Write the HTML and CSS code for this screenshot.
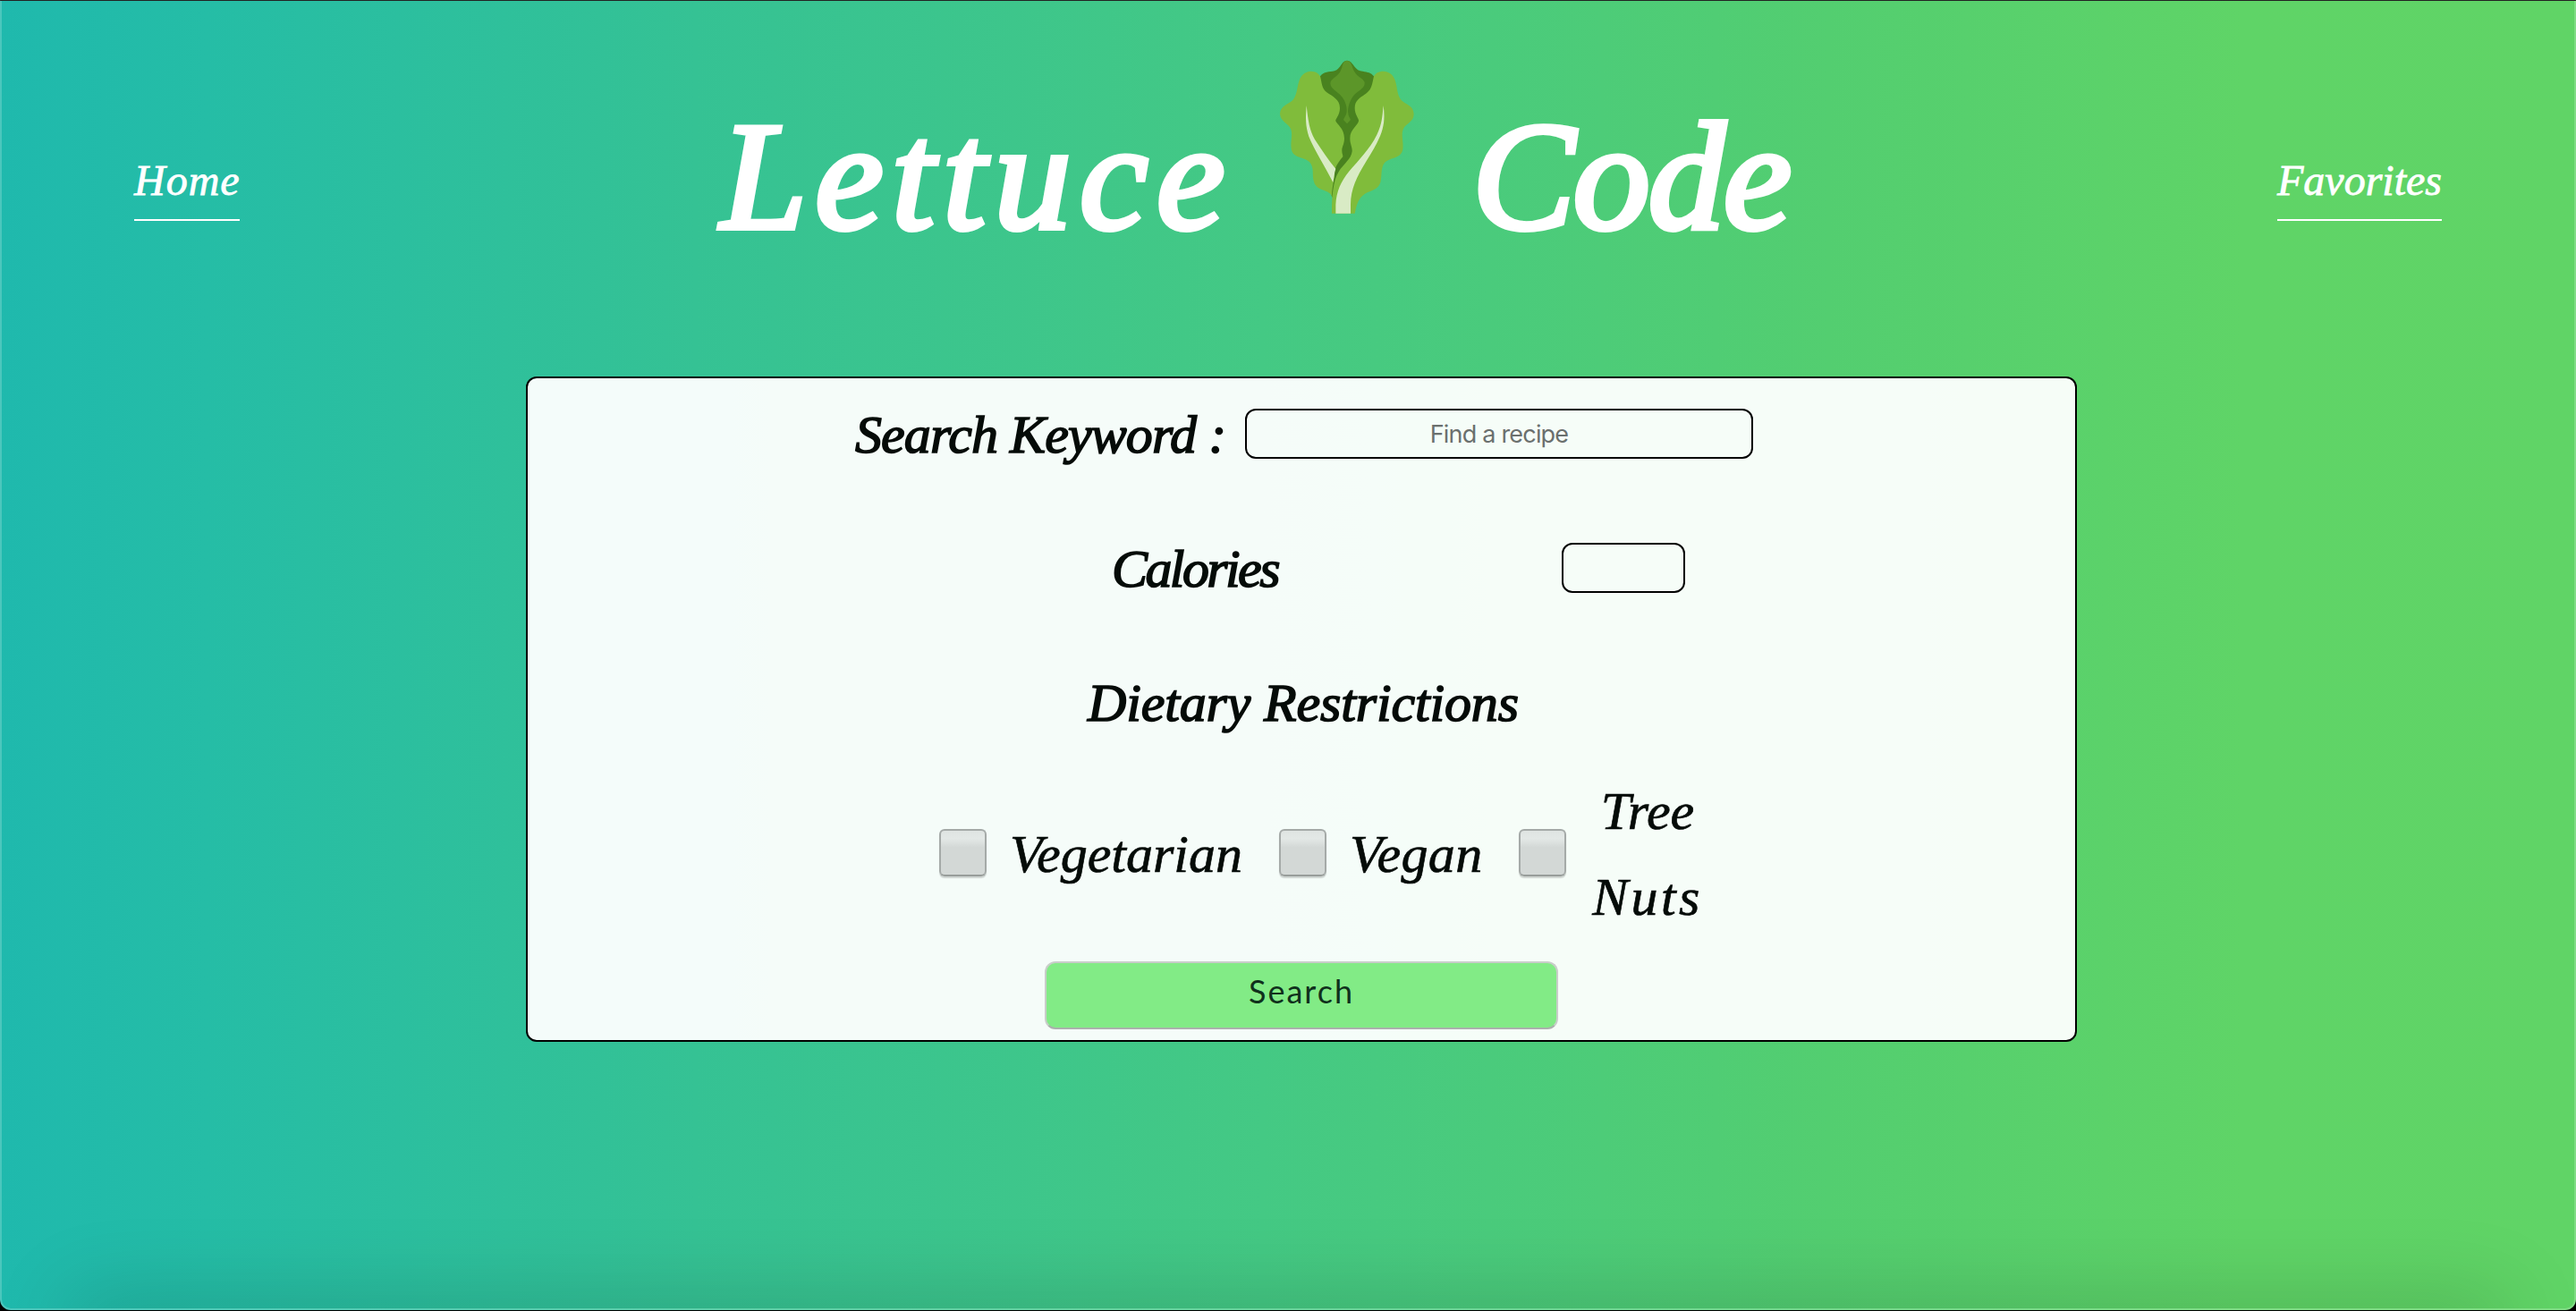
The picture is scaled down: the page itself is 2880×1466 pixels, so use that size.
FILE: index.html
```html
<!DOCTYPE html>
<html lang="en">
<head>
<meta charset="utf-8">
<title>Lettuce Code</title>
<link rel="stylesheet" href="styles.css">
</head>
<body>
<div class="window">
  <header class="header">
    <a class="nav-link nav-home">Home</a>
    <h1 class="title">
      <span class="word-lettuce">Lettuce</span>
      <svg class="logo" viewBox="0 0 660 630" aria-hidden="true">
        <path fill="#49821f" d="M228 106C240 90 258 92 276 88C298 80 298 54 318 53C338 54 340 80 362 88C382 92 396 90 408 106L440 300L300 480L268 512L200 300Z"/>
        <path fill="#5c9629" d="M318 53C335 54 332 74 344 92C356 112 378 114 377 130C376 150 352 154 336 176C322 198 320 220 322 230C322 240 328 244 330 252L318 265L306 252C308 244 314 238 316 230C320 214 314 192 302 176C286 156 262 148 262 130C262 114 282 110 294 92C306 72 301 54 318 53Z"/>
        <path fill="#80bc3b" d="M196 89C214 89 224 98 228 106C234 128 232 146 250 160C270 174 294 184 294 212C294 238 278 248 280 256C282 266 309 280 309 314C309 334 300 342 301 356C301 366 305 370 304 376C284 400 276 414 276 436C274 460 266 486 268 511C262 484 216 494 207 460C200 436 208 418 196 398C180 374 134 384 131 348C128 324 136 304 130 284C122 264 94 258 93 232C94 204 126 198 138 184C152 164 150 138 160 114C168 98 180 90 196 89Z"/>
        <path fill="#80bc3b" d="M440 89C424 89 412 96 408 106C402 130 402 148 384 162C366 176 344 184 344 212C344 236 358 246 357 256C354 272 328 284 328 314C328 334 336 342 335 358C332 384 308 398 290 426C270 458 267 514 267 566H344C350 536 356 514 378 500C398 488 422 488 430 462C436 438 430 414 444 396C462 376 500 384 505 350C508 324 498 302 507 282C516 264 542 260 542 232C540 202 512 200 500 186C484 166 488 142 478 116C470 98 458 90 440 89Z"/>
        <path fill="#d9ebc5" d="M182 204C188 258 192 286 210 318C234 354 254 386 280 416C275 430 275 446 271 462C244 408 208 352 190 308C178 270 179 246 182 204Z"/>
        <path fill="#d9ebc5" d="M440 204C446 252 442 284 418 330C386 394 330 454 330 536V566H280V536C282 492 298 458 324 426C354 390 396 348 418 302C436 264 436 242 440 204Z"/>
      </svg>
      <span class="word-code">Code</span>
    </h1>
    <a class="nav-link nav-favorites">Favorites</a>
  </header>
  <form class="card">
    <div class="row row-keyword">
      <label class="label label-keyword" for="keyword">Search Keyword :</label>
      <input class="field field-keyword" id="keyword" type="text" placeholder="Find a recipe">
    </div>
    <div class="row row-calories">
      <label class="label label-calories" for="calories">Calories</label>
      <input class="field field-calories" id="calories" type="text">
    </div>
    <div class="row row-heading">
      <h2 class="label label-diet">Dietary Restrictions</h2>
    </div>
    <div class="row row-checks">
      <span class="check"></span><span class="option vegetarian">Vegetarian</span>
      <span class="check"></span><span class="option vegan">Vegan</span>
      <span class="check"></span><span class="option nuts">Tree <span class="nuts-word">Nuts</span></span>
    </div>
    <button class="submit" type="button">Search</button>
  </form>
</div>
</body>
</html>
```
FILE: styles.css
```css
* { box-sizing: border-box; }

body {
  margin: 0;
  background: #000;
  font-family: "Apple Chancery", "Liberation Serif", serif;
}

.window {
  position: relative;
  height: 1465px;
  overflow: hidden;
  border-top: 1px solid #222;
  border-left: 2px solid rgba(255, 255, 255, .2);
  border-right: 2px solid rgba(255, 255, 255, .2);
  border-bottom: 2px solid rgba(255, 255, 255, .2);
  border-radius: 0 0 12px 12px;
  background: linear-gradient(90deg, #1fb9ad 0%, #25bda6 8%, #35c294 27%, #44c984 49%, #53ce70 71%, #5fd467 87%, #60d466 100%) border-box;
}

/* Soft shade along the bottom edge */
.window::after {
  content: "";
  position: absolute;
  left: 93px;
  right: 93px;
  bottom: -42px;
  height: 40px;
  box-shadow: 0 0 90px 18px rgba(0, 0, 0, .15);
}

.header {
  display: flex;
  align-items: flex-start;
  height: 420px;
  padding: 0 148px;
}

.nav-link {
  margin-top: 174px;
  height: 72px;
  border-bottom: 2px solid #fff;
  color: #fff;
  font-size: 48px;
  font-style: italic;
  line-height: 54px;
  white-space: nowrap;
  -webkit-text-stroke: .8px #fff;
}

.nav-home { width: 118px; letter-spacing: 1px; }
.nav-favorites { width: 184px; margin-left: auto; }

.title {
  display: flex;
  margin: 0 0 0 532px;
  color: #fff;
  font-size: 172px;
  font-style: italic;
  font-weight: 400;
  line-height: 200px;
  -webkit-text-stroke: 6px #fff;
}

.word-lettuce { width: 600px; margin-top: 96px; padding-left: 6px; letter-spacing: 9.5px; }
.word-code { width: 370px; margin-top: 96px; padding-left: 26px; letter-spacing: -2px; }
.logo { width: 220px; height: 210px; margin-top: 49px; stroke: none; }

.card {
  width: 1734px;
  height: 744px;
  margin-left: 586px;
  border: 2px solid #000;
  border-radius: 12px;
  background: rgba(255, 255, 255, .95);
}

.row { display: flex; align-items: center; }
.row-keyword { height: 124px; padding-left: 366px; }
.row-calories { height: 176px; padding-left: 653px; }
.row-heading { height: 128px; padding-left: 626px; }
.row-checks { height: 204px; padding-left: 460px; }

.label {
  margin: 0;
  padding-top: 1px;
  color: #050b08;
  font-size: 60px;
  font-style: italic;
  font-weight: 400;
  line-height: 80px;
  white-space: nowrap;
  -webkit-text-stroke: 1.6px #050b08;
}

.label-keyword { width: 436px; letter-spacing: -.9px; }
.label-calories { width: 503px; letter-spacing: -2.6px; }
.label-diet { padding: 0 0 2px; letter-spacing: -.15px; }

.field {
  height: 56px;
  padding: 0 8px;
  border: 2px solid #000;
  border-radius: 12px;
  background: transparent;
  font-family: Inter, sans-serif;
  font-size: 27px;
  letter-spacing: -.8px;
  text-align: center;
}

.field::placeholder { color: #6b706e; opacity: 1; }
.field-keyword { width: 568px; }
.field-calories { width: 138px; }

.check {
  width: 53px;
  height: 53px;
  border: 2px solid #a5aaa8;
  border-bottom-color: #989d9a;
  border-radius: 6px;
  background: linear-gradient(#dfe4e2, #e3e8e6 18%, #d3d8d6 38%, #d3d8d6);
  box-shadow: 0 2px 1px rgba(0, 0, 0, .16);
}

.option {
  padding-top: 3px;
  color: #050b08;
  font-size: 60px;
  font-style: italic;
  line-height: 96px;
  white-space: nowrap;
  -webkit-text-stroke: .7px #050b08;
}

.vegetarian { width: 327px; padding-left: 26px; }
.vegan { width: 215px; padding-left: 26px; letter-spacing: .4px; }
.nuts { width: 182px; text-align: center; white-space: normal; }
.nuts-word { display: block; letter-spacing: 3.4px; }

.submit {
  display: block;
  width: 574px;
  height: 76px;
  margin: 20px 0 0 578px;
  padding: 0 0 10px;
  border: 2px solid #c9cdca;
  border-bottom-color: #abb0ad;
  border-radius: 12px;
  background: #82eb86;
  color: #10301c;
  font-family: Papyrus, Lato, sans-serif;
  font-size: 36px;
  letter-spacing: 2px;
}
```
